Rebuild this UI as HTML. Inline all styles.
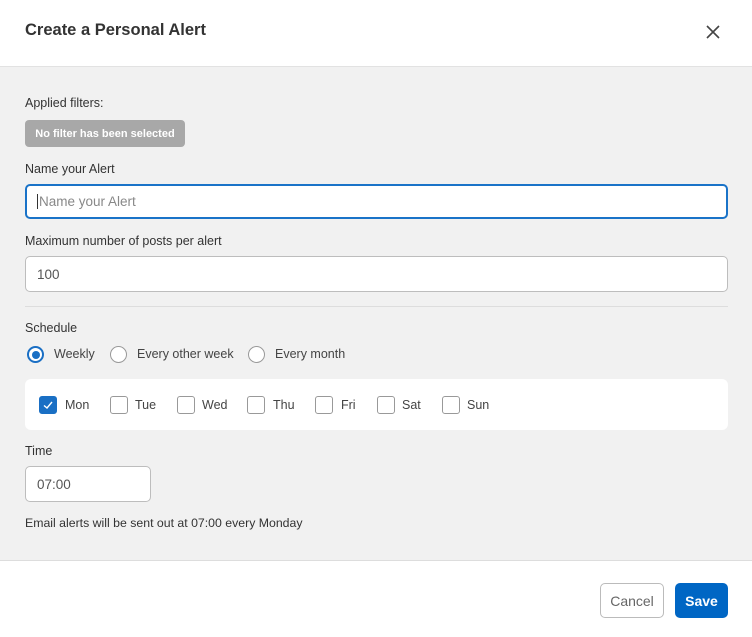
<!DOCTYPE html>
<html><head><style>
*{box-sizing:border-box;margin:0;padding:0}
body{width:752px;height:637px;background:#fff;font-family:"Liberation Sans",sans-serif;color:#333;position:relative;overflow:hidden}
.a{position:absolute}
.hdr{left:0;top:0;width:752px;height:67px;background:#fff;border-bottom:1px solid #e2e2e2}
.main{left:0;top:67px;width:752px;height:494px;background:#f1f1f1;border-bottom:1px solid #ddd}
.lbl{font-size:12.5px;color:#333}
.inp{background:#fff;border:1px solid #bdbdbd;border-radius:5px;font-size:13.5px;color:#555;padding-left:11px;display:flex;align-items:center}
.rad{width:17px;height:17px;border-radius:50%;border:1.5px solid #999;background:#fff}
.cb{width:18px;height:18px;border:1px solid #999;border-radius:3px;background:#fff}
.t{font-size:12.5px;color:#444}
</style></head><body>
<div class="a hdr"></div>
<div class="a" style="left:25px;top:21px;font-size:16.5px;font-weight:bold;color:#333">Create a Personal Alert</div>
<svg class="a" style="left:706px;top:25px" width="14" height="14" viewBox="0 0 14 14"><path d="M1 1L13 13M13 1L1 13" stroke="#444" stroke-width="1.6"/></svg>
<div class="a main"></div>
<div class="a lbl" style="left:25px;top:96px">Applied filters:</div>
<div class="a" style="left:25px;top:120px;width:160px;height:27px;background:#a8a8a8;border-radius:4px;color:#fff;font-size:11px;font-weight:bold;display:flex;align-items:center;justify-content:center">No filter has been selected</div>
<div class="a lbl" style="left:25px;top:162px">Name your Alert</div>
<div class="a inp" style="left:25px;top:184px;width:703px;height:35px;border:2px solid #1a73c8;color:#888;padding-left:10px"><span style="border-left:1px solid #333;padding-left:1px">Name your Alert</span></div>
<div class="a lbl" style="left:25px;top:234px">Maximum number of posts per alert</div>
<div class="a inp" style="left:25px;top:256px;width:703px;height:36px">100</div>
<div class="a" style="left:25px;top:306px;width:703px;height:1px;background:#ddd"></div>
<div class="a lbl" style="left:25px;top:321px">Schedule</div>
<div class="a rad" style="left:27px;top:346px;border:2px solid #1a6fc4;display:flex;align-items:center;justify-content:center"><div style="width:8px;height:8px;border-radius:50%;background:#1a6fc4"></div></div>
<div class="a t" style="left:54px;top:347px">Weekly</div>
<div class="a rad" style="left:110px;top:346px"></div>
<div class="a t" style="left:137px;top:347px">Every other week</div>
<div class="a rad" style="left:248px;top:346px"></div>
<div class="a t" style="left:275px;top:347px">Every month</div>
<div class="a" style="left:25px;top:379px;width:703px;height:51px;background:#fff;border-radius:6px"></div>
<div class="a cb" style="left:39px;top:396px;background:#1a6fc4;border-color:#1a6fc4"><svg width="16" height="16" viewBox="0 0 16 16"><path d="M4 8.5L7 11L12 5" stroke="#fff" stroke-width="1.4" fill="none"/></svg></div>
<div class="a t" style="left:65px;top:398px">Mon</div>
<div class="a cb" style="left:110px;top:396px"></div><div class="a t" style="left:135px;top:398px">Tue</div>
<div class="a cb" style="left:177px;top:396px"></div><div class="a t" style="left:202px;top:398px">Wed</div>
<div class="a cb" style="left:247px;top:396px"></div><div class="a t" style="left:273px;top:398px">Thu</div>
<div class="a cb" style="left:315px;top:396px"></div><div class="a t" style="left:341px;top:398px">Fri</div>
<div class="a cb" style="left:377px;top:396px"></div><div class="a t" style="left:402px;top:398px">Sat</div>
<div class="a cb" style="left:442px;top:396px"></div><div class="a t" style="left:467px;top:398px">Sun</div>
<div class="a lbl" style="left:25px;top:444px">Time</div>
<div class="a inp" style="left:25px;top:466px;width:126px;height:36px">07:00</div>
<div class="a lbl" style="left:25px;top:516px;font-size:12.3px">Email alerts will be sent out at 07:00 every Monday</div>
<div class="a" style="left:600px;top:583px;width:64px;height:35px;border:1px solid #bbb;border-radius:5px;background:#fff;font-size:14px;color:#666;display:flex;align-items:center;justify-content:center">Cancel</div>
<div class="a" style="left:675px;top:583px;width:53px;height:35px;border-radius:5px;background:#0066c4;font-size:14px;font-weight:bold;color:#fff;display:flex;align-items:center;justify-content:center">Save</div>
</body></html>
